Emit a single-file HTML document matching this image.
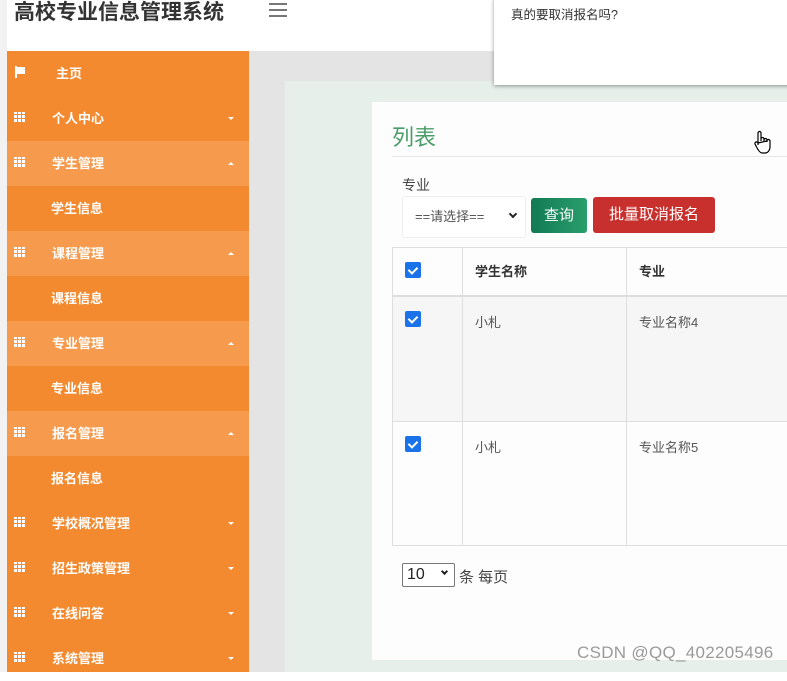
<!DOCTYPE html>
<html><head><meta charset="utf-8"><style>
*{margin:0;padding:0;box-sizing:border-box}
body{width:787px;height:672px;overflow:hidden;position:relative;background:#fff;font-family:"Liberation Sans","Noto Sans CJK SC",sans-serif}
.abs{position:absolute}
.title{left:14px;top:-4px;font-size:21px;font-weight:bold;color:#333;white-space:nowrap}
.ham{left:269px;top:3px;width:18px}
.ham i{display:block;height:2px;background:#777;margin-bottom:4px}
.gray{left:249px;top:51px;width:538px;height:621px;background:#e3e4e3}
.green{left:285px;top:81px;width:502px;height:591px;background:#e6efea}
.side{left:7px;top:51px;width:242px;height:621px;background:#f48a30}
.it{height:45px;position:relative;color:#fff;font-size:13px;line-height:45px;font-weight:bold}
.it.l{background:#f69a4e}
.it .t{position:absolute;left:45px}
.it.s .t{left:44px}
.grid{position:absolute;left:7px;top:16px;width:12px;height:10px;background:repeating-linear-gradient(90deg,#fff 0 3px,transparent 3px 4px),#f48a30}
.grid:after{content:"";position:absolute;inset:0;background:repeating-linear-gradient(0deg,transparent 0 3px,#f48a30 3px 4px)}
.l .grid{background:repeating-linear-gradient(90deg,#fff 0 3px,transparent 3px 4px),#f69a4e}
.l .grid:after{background:repeating-linear-gradient(0deg,transparent 0 3px,#f69a4e 3px 4px)}
.car{position:absolute;left:221px;top:21px;border-left:3px solid transparent;border-right:3px solid transparent;border-top:3px solid #fff}
.car.u{border-top:0;border-bottom:3px solid #fff}
.card{left:372px;top:102px;width:415px;height:558px;background:#fdfdfd}
.dlg{left:494px;top:-2px;width:300px;height:87px;background:#fff;box-shadow:0 1px 4px rgba(0,0,0,.4);font-size:12.5px;color:#333;padding:6px 0 0 17px}
table{border-collapse:collapse;position:absolute;left:392px;top:247px;width:420px;font-size:13px;color:#555}
td{border:1px solid #dedede;vertical-align:top;padding-left:12px}
.cb{display:inline-block;width:16px;height:16px;background:#1a73e8;border-radius:2px;position:relative}
.cb:after{content:"";position:absolute;left:5px;top:3px;width:4px;height:7px;border:solid #fff;border-width:0 2px 2px 0;transform:rotate(45deg)}
.dn{position:absolute;width:6px;height:6px;border:solid #222;border-width:0 2px 2px 0;transform:rotate(45deg)}
</style></head><body>
<div class="abs" style="left:0;top:0;width:7px;height:672px;background:#f2f2f2"></div>
<div class="abs title">高校专业信息管理系统</div>
<div class="abs ham"><i></i><i></i><i></i></div>
<div class="abs gray"></div>
<div class="abs green"></div>
<div class="abs side">
<div class="it"><svg style="position:absolute;left:8px;top:15px" width="11" height="12"><path d="M1 0V12" stroke="#fff" stroke-width="2"/><path d="M2 1H10V8H2Z" fill="#fff"/></svg><span class="t" style="left:49px">主页</span></div>
<div class="it"><i class="grid"></i><span class="t">个人中心</span><i class="car"></i></div>
<div class="it l"><i class="grid"></i><span class="t">学生管理</span><i class="car u"></i></div>
<div class="it s"><span class="t">学生信息</span></div>
<div class="it l"><i class="grid"></i><span class="t">课程管理</span><i class="car u"></i></div>
<div class="it s"><span class="t">课程信息</span></div>
<div class="it l"><i class="grid"></i><span class="t">专业管理</span><i class="car u"></i></div>
<div class="it s"><span class="t">专业信息</span></div>
<div class="it l"><i class="grid"></i><span class="t">报名管理</span><i class="car u"></i></div>
<div class="it s"><span class="t">报名信息</span></div>
<div class="it"><i class="grid"></i><span class="t">学校概况管理</span><i class="car"></i></div>
<div class="it"><i class="grid"></i><span class="t">招生政策管理</span><i class="car"></i></div>
<div class="it"><i class="grid"></i><span class="t">在线问答</span><i class="car"></i></div>
<div class="it"><i class="grid"></i><span class="t">系统管理</span><i class="car"></i></div>
</div>
<div class="abs card"></div>
<div class="abs" style="left:392px;top:120px;font-size:22px;color:#4a9d6a">列表</div>
<div class="abs" style="left:392px;top:156px;width:395px;height:1px;background:#e6e6e6"></div>
<div class="abs" style="left:402px;top:175px;font-size:14px;color:#444">专业</div>
<div class="abs" style="left:402px;top:196px;width:124px;height:42px;border:1px solid #eee;border-radius:3px;background:#fff;font-size:13px;color:#555;line-height:40px;padding-left:12px">==请选择==<i class="dn" style="right:9px;top:14px"></i></div>
<div class="abs" style="left:531px;top:198px;width:56px;height:35px;background:linear-gradient(90deg,#127a56,#2a9e6c);border-radius:3px;color:#fff;font-size:15px;line-height:35px;text-align:center">查询</div>
<div class="abs" style="left:593px;top:197px;width:122px;height:36px;background:#c8302d;border-radius:3px;color:#fff;font-size:15px;line-height:36px;text-align:center">批量取消报名</div>
<table>
<tr style="height:48px;border-bottom:2px solid #ddd"><td style="width:70px;padding-top:14px"><span class="cb"></span></td><td style="width:164px;font-weight:bold;color:#333;line-height:47px">学生名称</td><td style="font-weight:bold;color:#333;line-height:47px">专业</td></tr>
<tr style="height:125px;background:#f5f6f5"><td style="padding-top:14px"><span class="cb"></span></td><td style="padding-top:15px">小札</td><td style="padding-top:15px">专业名称4</td></tr>
<tr style="height:124px"><td style="padding-top:14px"><span class="cb"></span></td><td style="padding-top:15px">小札</td><td style="padding-top:15px">专业名称5</td></tr>
</table>
<div class="abs" style="left:402px;top:563px;width:53px;height:24px;border:1px solid #777;border-radius:2px;font-size:16px;line-height:22px;padding-left:4px;color:#222;background:#fff">10<i class="dn" style="right:7px;top:5px;width:5px;height:5px"></i></div>
<div class="abs" style="left:459px;top:566px;font-size:15px;color:#444">条 每页</div>
<div class="abs dlg">真的要取消报名吗?</div>
<div class="abs" style="left:577px;top:643px;font-size:17px;letter-spacing:0.3px;color:rgba(120,120,120,.75)">CSDN @QQ_402205496</div>
<svg class="abs" style="left:753px;top:130px" width="18" height="26"><path d="M5 15V3a1.5 1.5 0 0 1 3 0v8m0-2a1.5 1.5 0 0 1 3 0v2m0-1a1.5 1.5 0 0 1 3 0v2m0-1a1.5 1.5 0 0 1 3 0v6c0 3-2 6-5 6h-3c-2 0-4-3-6-7l-1-2a1.5 1.5 0 0 1 3-1z" fill="#fff" stroke="#000" stroke-width="1.2"/></svg>
</body></html>
